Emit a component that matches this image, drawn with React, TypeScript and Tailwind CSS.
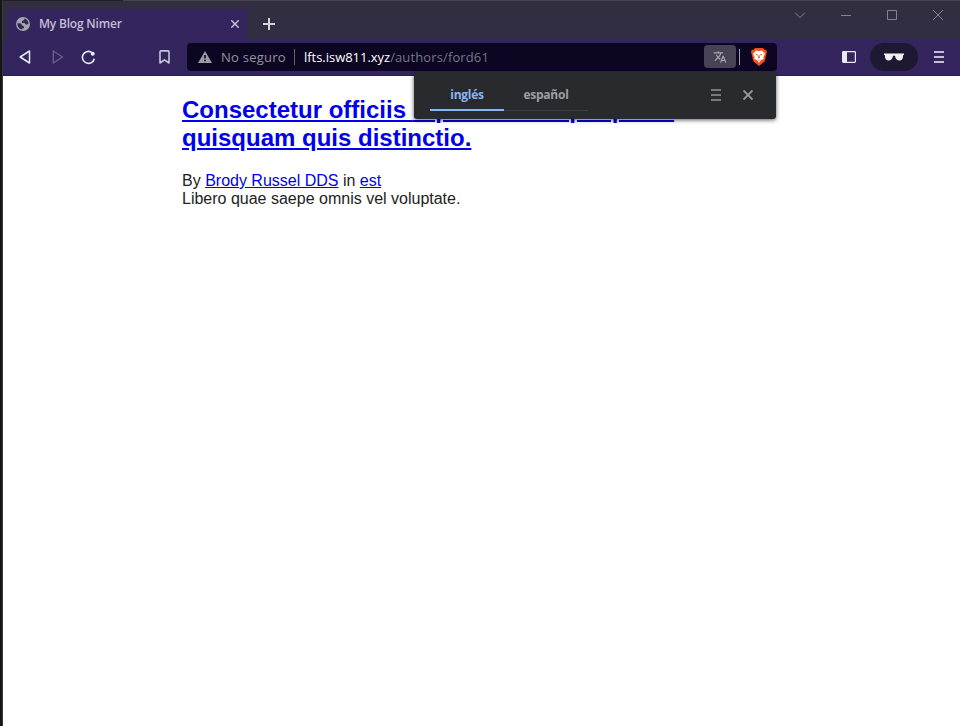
import React from "react";

const ui = "font-['Open_Sans','Noto_Sans',sans-serif]";

function TabStrip() {
  return (
    <div className="flex h-[36px] items-end bg-[#322e42]">
      <div className="ml-1 flex h-[30px] w-[240px] items-center rounded-t-[3px] bg-[#34255f] pl-[9px] pr-[8px]">
        <svg width="14" height="14" viewBox="0 0 14 14" className="shrink-0">
          <circle cx="7" cy="7" r="7" fill="#a5a5ab" />
          <path d="M1.4 6.3H3.6Q6 6.3 6 8.4Q8 8.400 8 10.300V11.200H6.200V12.600C3.400 12.300 1.200 9.800 1.400 6.300ZM8.600 1.600C10.500 2 12.300 4 12.600 6.300Q11.500 8 10.200 7.600Q9 7.300 8.700 5.900H6V4.300Q6 3.300 7.400 3.400Q8.400 3.300 8.600 1.600Z" fill="#34255f" />
        </svg>
        <span className="ml-[9px] whitespace-nowrap text-[12px] font-semibold leading-[16px] tracking-[-0.2px] text-[#c3bfd3]">My Blog Nimer</span>
        <svg width="8" height="8" viewBox="0 0 8 8" className="ml-auto" stroke="#c9c5d6" strokeWidth="1.4">
          <path d="M.3 .3 7.700 7.700M7.700 .3 .3 7.700" />
        </svg>
      </div>
      <svg width="12" height="12" viewBox="0 0 12 12" className="mb-[9px] ml-[16px]" stroke="#d5d3dc" strokeWidth="2">
        <path d="M6 0v12M0 6h12" />
      </svg>
      <div className="ml-auto mr-[17px] flex h-full items-start gap-[36px] pt-[7px]">
        <svg width="10" height="10" viewBox="0 0 10 10" fill="none" stroke="#858293"><path d="M0 2.500l5 5 5-5" /></svg>
        <svg width="10" height="10" viewBox="0 0 10 10" fill="none" stroke="#858293"><path d="M0 5.500h10" /></svg>
        <svg width="10" height="10" viewBox="0 0 10 10" fill="none" stroke="#858293"><path d="M.5 .5h9v9h-9z" /></svg>
        <svg width="10" height="10" viewBox="0 0 10 10" fill="none" stroke="#858293"><path d="M0 0l10 10M10 0L0 10" /></svg>
      </div>
    </div>
  );
}

function Toolbar() {
  return (
    <div className="flex h-[37px] items-center border-b border-[#2b1f50] bg-[#34255f]">
      <div className="flex w-[184px] items-center pl-[16px]">
        <svg width="12" height="14" viewBox="0 0 12 14" fill="none" stroke="#ece9f4" strokeWidth="1.5" strokeLinejoin="round"><path d="M10.5 1v12L1.2 7z" /></svg>
        <svg width="12" height="14" viewBox="0 0 12 14" className="ml-[21px]" fill="none" stroke="#6b5f8b" strokeWidth="1.4" strokeLinejoin="round"><path d="M1.3 1v12L10.500 7z" /></svg>
        <svg width="15" height="15" viewBox="0 0 15 15" className="ml-[17px]" fill="none" stroke="#ece9f4" strokeWidth="1.6">
          <path d="M13.300 8.700A6 6 0 1 1 10.500 2.200" /><circle cx="11.700" cy="3.800" r="2" fill="#ece9f4" stroke="none" />
        </svg>
        <svg width="11" height="14" viewBox="0 0 11 14" className="ml-auto mr-[17px]" fill="none" stroke="#c9c5d6" strokeWidth="1.600" strokeLinejoin="round"><path d="M1 2Q1 .9 2 .9h7q1 0 1 1.1v11L5.500 9.800 1 13z" /></svg>
      </div>
      <div className="flex h-[28px] w-[590px] items-center rounded-[4px] bg-[#0c0623] pl-[11px] pr-[10px]">
        <svg width="14" height="12" viewBox="0 0 14 12"><path d="M7 0 L14 12 H0Z" fill="#9b9ba2" /><path d="M6.200 4h1.600v3.600H6.200zM6.200 8.800h1.600v1.500H6.200z" fill="#0c0623" /></svg>
        <span className="ml-[9px] w-[65px] whitespace-nowrap text-[13px] leading-[18px] tracking-[0.25px] text-[#93939f]">No seguro</span>
        <span className="ml-[8px] h-[16px] w-px bg-[#66636f]" />
        <span className="ml-[9px] whitespace-nowrap text-[13px] leading-[18px] tracking-[-0.03px] text-white">lfts.isw811.xyz<span className="tracking-[0.12px] text-[#77758a]">/authors/ford61</span></span>
        <span className="ml-auto mb-px flex h-[23px] w-[32px] items-center justify-center rounded-[4px] bg-[#474256]">
          <svg width="14" height="14" viewBox="0 0 24 24" fill="#aaa8b2"><path d="M12.870 15.070l-2.540-2.510.03-.03A17.520 17.520 0 0014.070 6H17V4h-7V2H8v2H1v2h11.170C11.500 7.920 10.440 9.750 9 11.350 8.070 10.320 7.300 9.190 6.690 8h-2c.73 1.630 1.730 3.170 2.980 4.560l-5.090 5.020L4 19l5-5 3.110 3.110.76-2.040zM18.500 10h-2L12 22h2l1.120-3h4.750L21 22h2l-4.500-12zm-2.620 7l1.620-4.330L19.120 17h-3.240z" /></svg>
        </span>
        <span className="ml-[3px] h-[16px] w-px bg-[#a09ea9]" />
        <svg width="16" height="18" viewBox="0 0 16 18" className="ml-[11px]">
          <path d="M4 0h8l1.500 1.700L15.200 1.800 16 4 15.400 6 13.700 13.200 8 18 2.300 13.200 .6 6 0 4 .8 1.800 2.500 1.700z" fill="#f1501b" />
          <path d="M5 2.500 8 3l3-.5 3 3.200-1.600 3.200.3 1.900-3 1.700L8 14.800 6.300 12.500 3.300 10.800l.3-1.900L2 5.700z" fill="#fff" />
          <path d="M4 5.800l2.900.7-.8 1.300zM12 5.800l-2.900.7.8 1.300zM7.600 7h.8l.5 3L8 10.600 7.100 10zM5.800 11.500L8 12.700l2.200-1.200L8 12z" fill="#f1501b" />
        </svg>
      </div>
      <div className="ml-auto flex items-center pr-[16px]">
        <svg width="14" height="12" viewBox="0 0 14 12"><rect x=".6" y=".6" width="12.800" height="10.800" rx=".8" fill="none" stroke="#ece9f0" strokeWidth="1.200" /><path d="M1 1h4v10H1z" fill="#ece9f0" /></svg>
        <span className="ml-[14px] flex h-[28px] w-[48px] items-center justify-center rounded-full bg-[#1e1832]">
          <svg width="20" height="8" viewBox="0 0 20 8" fill="#f4f2ef"><path d="M0 .4H20V1.800L19.100 2.200Q19 7.500 15.500 7.500Q11.700 7.500 11 2.700H9Q8.300 7.500 4.500 7.500Q1 7.500 .9 2.200L0 1.800Z" /></svg>
        </span>
        <svg width="10" height="12" viewBox="0 0 10 12" className="ml-[16px]" stroke="#c3bfd3" strokeWidth="2"><path d="M0 1h10M0 6h10M0 11h10" /></svg>
      </div>
    </div>
  );
}

function TranslatePopup() {
  return (
    <div className={`${ui} absolute left-[414px] top-[72px] flex h-[47px] w-[362px] rounded-[3px] bg-[#292a2d] pl-[16px] text-[12px] font-bold tracking-[-0.25px] shadow-[0_1px_4px_rgba(0,0,0,0.65)]`}>
      <div className="flex h-[39px] w-[74px] items-center justify-center border-b-2 border-[#8ab4f8] pt-[9px] text-[#8ab4f8]">inglés</div>
      <div className="flex h-[39px] w-[84px] items-center justify-center border-b border-[#3c3d41] pt-[8px] text-[#9aa0a6]">español</div>
      <div className="ml-auto flex items-center gap-[22px] pb-px pr-[23px]">
        <svg width="10" height="12" viewBox="0 0 10 12" stroke="#919397" strokeWidth="1.600"><path d="M0 1h10M0 6h10M0 11h10" /></svg>
        <svg width="10" height="10" viewBox="0 0 10 10" stroke="#9a9ca0" strokeWidth="1.900"><path d="M.5 .5l9 9M9.500 .5l-9 9" /></svg>
      </div>
    </div>
  );
}

export default function App() {
  return (
    <div className="relative flex h-[726px] w-[960px] overflow-hidden bg-white">
      <div className="w-[3px] shrink-0 border-r border-[#38383b] bg-[#161616]" />
      <div className="flex min-w-0 flex-1 flex-col">
        <div className={ui}>
          <div className="flex h-[3px] flex-col"><div className="flex h-px"><div className="w-[120px] bg-[#202020]" /><div className="flex-1 bg-[#46454c]" /></div><div className="h-[2px] bg-[#322e42]" /></div>
          <TabStrip />
          <Toolbar />
        </div>
        <main className="ml-[179px] w-[600px] pt-[20px] font-['Liberation_Sans',Arial,sans-serif] text-[16px] leading-[18px] text-[#222]">
          <h1 className="text-[24px] font-bold leading-[28px] text-[#0000ee]">
            <a className="block whitespace-nowrap underline">Consectetur officiis <span className="tracking-[-0.06px]">repudiandae quo porro</span><br />quisquam quis distinctio.</a>
          </h1>
          <p className="mt-[20px]">By <a className="text-[#0000ee] underline">Brody Russel DDS</a> in <a className="text-[#0000ee] underline">est</a></p>
          <p>Libero quae saepe omnis vel voluptate.</p>
        </main>
      </div>
      <TranslatePopup />
    </div>
  );
}
